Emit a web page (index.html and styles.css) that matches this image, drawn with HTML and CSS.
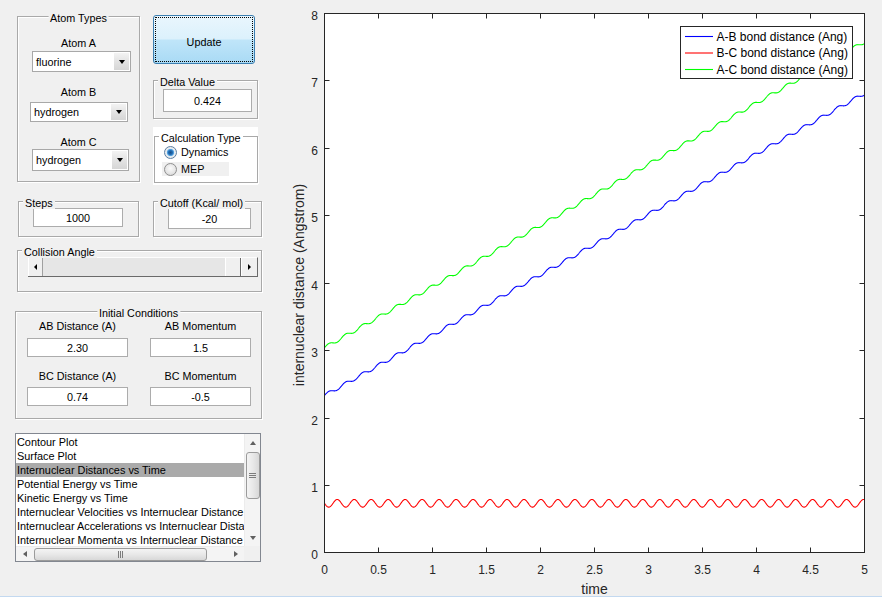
FILE: index.html
```html
<!DOCTYPE html>
<html lang="en">
<head>
<meta charset="utf-8">
<title>Reaction Dynamics</title>
<link rel="stylesheet" href="styles.css">
</head>
<body>
<div class="app">
  <div class="controls">
    <div class="row row-top">
      <div class="group atom-group">
        <div class="group-title center">Atom Types</div>
        <div class="field field-a">
          <div class="label">Atom A</div>
          <div class="dropdown dd-a"><span class="dd-text">fluorine</span><span class="dd-btn"></span></div>
        </div>
        <div class="field field-b">
          <div class="label">Atom B</div>
          <div class="dropdown dd-b"><span class="dd-text">hydrogen</span><span class="dd-btn"></span></div>
        </div>
        <div class="field field-c">
          <div class="label">Atom C</div>
          <div class="dropdown dd-c"><span class="dd-text">hydrogen</span><span class="dd-btn"></span></div>
        </div>
      </div>
      <div class="side">
        <button class="update" type="button">Update</button>
        <div class="group delta-group">
          <div class="group-title">Delta Value</div>
          <input class="edit delta-edit" type="text" value="0.424" readonly>
        </div>
        <div class="calc-panel">
          <div class="group calc-group">
            <div class="group-title white">Calculation Type</div>
            <div class="radio-row rr-dyn"><span class="radio on"></span>Dynamics</div>
            <div class="radio-row rr-mep"><span class="radio"></span>MEP</div>
          </div>
        </div>
      </div>
    </div>

    <div class="row row-mid">
      <div class="group steps-group">
        <div class="group-title">Steps</div>
        <input class="edit steps-edit" type="text" value="1000" readonly>
      </div>
      <div class="group cutoff-group">
        <div class="group-title">Cutoff (Kcal/ mol)</div>
        <input class="edit cutoff-edit" type="text" value="-20" readonly>
      </div>
    </div>

    <div class="group collision-group">
      <div class="group-title">Collision Angle</div>
      <div class="slider">
        <span class="sl-btn sl-left"><span class="tri tri-left"></span></span>
        <span class="sl-track"></span>
        <span class="sl-thumb"></span>
        <span class="sl-btn sl-right"><span class="tri tri-right"></span></span>
      </div>
    </div>

    <div class="group initial-group">
      <div class="group-title center">Initial Conditions</div>
      <div class="ic-grid">
        <div class="label">AB Distance (A)</div>
        <div class="label">AB Momentum</div>
        <input class="edit ic-edit" type="text" value="2.30" readonly>
        <input class="edit ic-edit" type="text" value="1.5" readonly>
        <div class="label ic-label2">BC Distance (A)</div>
        <div class="label ic-label2">BC Momentum</div>
        <input class="edit ic-edit2" type="text" value="0.74" readonly>
        <input class="edit ic-edit2" type="text" value="-0.5" readonly>
      </div>
    </div>

    <div class="listbox">
      <div class="lb-items">
        <div class="lb-item">Contour Plot</div>
        <div class="lb-item">Surface Plot</div>
        <div class="lb-item sel">Internuclear Distances vs Time</div>
        <div class="lb-item">Potential Energy vs Time</div>
        <div class="lb-item">Kinetic Energy vs Time</div>
        <div class="lb-item">Internuclear Velocities vs Internuclear Distance</div>
        <div class="lb-item">Internuclear Accelerations vs Internuclear Distance</div>
        <div class="lb-item">Internuclear Momenta vs Internuclear Distance</div>
      </div>
      <div class="vscroll">
        <span class="sb-btn"><span class="arr arr-up"></span></span>
        <span class="vthumb"><span class="grip-v"></span></span>
        <span class="sb-space"></span>
        <span class="sb-btn"><span class="arr arr-down"></span></span>
      </div>
      <div class="hscroll">
        <span class="sb-btn"><span class="arr arr-left"></span></span>
        <span class="hthumb"><span class="grip-h"></span></span>
        <span class="sb-space"></span>
        <span class="sb-btn"><span class="arr arr-right"></span></span>
      </div>
      <div class="corner"></div>
    </div>
  </div>

  <svg class="plot" width="612" height="596" viewBox="270 0 612 596" xmlns="http://www.w3.org/2000/svg">
    <defs>
      <clipPath id="axclip"><rect x="324.5" y="13.5" width="540" height="539"/></clipPath>
    </defs>
    <rect class="ax-bg" x="324.5" y="13.5" width="540" height="539"/>
    <g class="curves" clip-path="url(#axclip)">
      <polyline id="c-ab" class="c-blue" points=""/>
      <polyline id="c-bc" class="c-red" points=""/>
      <polyline id="c-ac" class="c-green" points=""/>
    </g>
    <rect class="ax-box" x="324.5" y="13.5" width="540" height="539"/>
    <path class="ticks" d="
      M324.5 552.5v-5 M378.5 552.5v-5 M432.5 552.5v-5 M486.5 552.5v-5 M540.5 552.5v-5 M594.5 552.5v-5 M648.5 552.5v-5 M702.5 552.5v-5 M756.5 552.5v-5 M810.5 552.5v-5 M864.5 552.5v-5
      M324.5 13.5v5 M378.5 13.5v5 M432.5 13.5v5 M486.5 13.5v5 M540.5 13.5v5 M594.5 13.5v5 M648.5 13.5v5 M702.5 13.5v5 M756.5 13.5v5 M810.5 13.5v5 M864.5 13.5v5
      M324.5 552.5h5 M324.5 485.5h5 M324.5 418.5h5 M324.5 350.5h5 M324.5 283.5h5 M324.5 215.5h5 M324.5 148.5h5 M324.5 80.5h5 M324.5 13.5h5
      M864.5 552.5h-5 M864.5 485.5h-5 M864.5 418.5h-5 M864.5 350.5h-5 M864.5 283.5h-5 M864.5 215.5h-5 M864.5 148.5h-5 M864.5 80.5h-5 M864.5 13.5h-5"/>
    <g class="ytl">
      <text x="318" y="559">0</text>
      <text x="318" y="491.5">1</text>
      <text x="318" y="424.5">2</text>
      <text x="318" y="356.5">3</text>
      <text x="318" y="289.5">4</text>
      <text x="318" y="221.5">5</text>
      <text x="318" y="154.5">6</text>
      <text x="318" y="86.5">7</text>
      <text x="318" y="19.5">8</text>
    </g>
    <g class="xtl">
      <text x="324.5" y="573.5">0</text>
      <text x="378.5" y="573.5">0.5</text>
      <text x="432.5" y="573.5">1</text>
      <text x="486.5" y="573.5">1.5</text>
      <text x="540.5" y="573.5">2</text>
      <text x="594.5" y="573.5">2.5</text>
      <text x="648.5" y="573.5">3</text>
      <text x="702.5" y="573.5">3.5</text>
      <text x="756.5" y="573.5">4</text>
      <text x="810.5" y="573.5">4.5</text>
      <text x="864.5" y="573.5">5</text>
    </g>
    <text class="axlabel" x="594.5" y="593.5">time</text>
    <text class="axlabel" transform="translate(304 285) rotate(-90)">internuclear distance (Angstrom)</text>
    <g class="legend">
      <rect class="lg-box" x="680.5" y="26.5" width="172" height="52"/>
      <line class="c-blue" x1="685" y1="36.5" x2="713" y2="36.5"/>
      <line class="c-red" x1="685" y1="53" x2="713" y2="53"/>
      <line class="c-green" x1="685" y1="69.5" x2="713" y2="69.5"/>
      <text class="lg-text" x="716.5" y="40.8">A-B bond distance (Ang)</text>
      <text class="lg-text" x="716.5" y="57.3">B-C bond distance (Ang)</text>
      <text class="lg-text" x="716.5" y="73.8">A-C bond distance (Ang)</text>
    </g>
  </svg>
</div>
<div class="status-line"></div>
<script src="script.js"></script>
</body>
</html>
```

FILE: styles.css
```css
* { box-sizing: border-box; }
html, body { margin: 0; padding: 0; }
body {
  background: #f0f0f0;
  font-family: "Liberation Sans", Arial, sans-serif;
  font-size: 10.8px;
  color: #000;
  width: 882px;
  height: 597px;
  overflow: hidden;
}
.app { display: flex; height: 596px; }
.status-line { height: 1px; background: #c3d9f0; }

.controls {
  width: 270px;
  flex: none;
  display: flex;
  flex-direction: column;
  align-items: flex-start;
}
.row { display: flex; align-items: flex-start; }

/* group boxes */
.group {
  position: relative;
  border: 1px solid #a9a9a9;
  box-shadow: inset 1px 1px 0 #fff, 1px 1px 0 #fff;
}
.group-title {
  position: absolute;
  top: -5px;
  left: 4px;
  padding: 0 2px;
  line-height: 12px;
  background: #f0f0f0;
  white-space: nowrap;
}
.group-title.center { left: 50%; transform: translateX(-50%); }
.group-title.white { background: #fff; }

.label { line-height: 14px; text-align: center; white-space: nowrap; }

/* edits */
.edit {
  display: block;
  margin: 0;
  padding: 0;
  border: 1px solid #acacac;
  background: #fff;
  font: inherit;
  color: #000;
  text-align: center;
  outline: none;
}

/* dropdowns */
.dropdown {
  display: flex;
  align-items: stretch;
  border: 1px solid #a8a8a8;
  background: #fff;
}
.dd-text { flex: 1; padding-left: 3px; display: flex; align-items: center; }
.dd-btn {
  width: 15px;
  margin: 1px;
  background: linear-gradient(#f3f3f3, #e3e3e3 50%, #d6d6d6);
  display: flex;
  align-items: center;
  justify-content: center;
}
.dd-btn::after {
  content: "";
  border-left: 3.5px solid transparent;
  border-right: 3.5px solid transparent;
  border-top: 4px solid #000;
}

/* top row */
.row-top { margin-left: 17px; }
.atom-group { width: 123px; height: 166px; margin-top: 16px; }
.field-a { margin-top: 19px; }
.field-b, .field-c { margin-top: 13px; }
.dd-a { margin: 1px 0 0 14px; width: 99px; height: 21px; }
.dd-b { margin: 3px 0 0 12px; width: 98px; height: 20px; }
.dd-c { margin: 0 0 0 14px; width: 97px; height: 22px; }

.side { margin-left: 13px; width: 105px; display: flex; flex-direction: column; }
.update {
  width: 102px;
  height: 49px;
  margin: 15px 0 0 0;
  padding: 4px 0 0 0;
  border: 1px solid #3c7fb1;
  border-radius: 3px;
  background: linear-gradient(#e9f6fd 0%, #dcf1fc 48%, #bfe5f9 52%, #a9daf5 100%);
  font: inherit;
  color: #000;
  outline: 1px dotted #000;
  outline-offset: -3px;
}
.delta-group { width: 105px; height: 39px; margin-top: 16px; }
.delta-edit { margin: 8px 0 0 9px; width: 89px; height: 23px; }

.calc-panel {
  margin-top: 8px;
  width: 105px;
  height: 58px;
  background: #fff;
  padding: 9px 0 0 1px;
}
.calc-group { width: 104px; height: 47px; }
.radio-row { display: flex; align-items: center; height: 14px; gap: 4px; }
.rr-dyn { margin: 8px 0 0 9px; }
.rr-mep { margin: 3px 0 0 7px; width: 67px; padding-left: 2px; background: #f0f0f0; }
.radio {
  flex: none;
  width: 13px;
  height: 13px;
  border-radius: 50%;
  border: 1px solid #8f8f8f;
  background: radial-gradient(circle at 50% 40%, #fbfbfb 0, #e6e6e6 55%, #cdcdcd 100%);
}
.radio.on {
  border-color: #5c7fa3;
  background: radial-gradient(circle at 50% 50%, #1a4f86 0, #1f6cb4 2px, #5fa8e2 3.3px, #d8ebf8 4px, #eeeeee 4.6px, #d9d9d9 100%);
}

/* steps / cutoff */
.row-mid { margin: 16px 0 0 18px; gap: 14px; }
.steps-group { width: 121px; height: 36px; }
.steps-edit { margin: 6px 0 0 14px; width: 90px; height: 19px; }
.cutoff-group { width: 109px; height: 36px; }
.cutoff-edit { margin: 6px 0 0 14px; width: 83px; height: 21px; }

/* collision angle */
.collision-group { margin: 13px 0 0 17px; width: 245px; height: 42px; }
.slider {
  display: flex;
  margin: 6px 0 0 10px;
  width: 230px;
  height: 20px;
  background: #e6e6e6;
  border-bottom: 1px solid #6a6a6a;
  border-right: 1px solid #6a6a6a;
  border-top: 1px solid #fdfdfd;
}
.sl-btn {
  width: 15px;
  background: #f0f0f0;
  display: flex;
  align-items: center;
  justify-content: center;
  border-left: 1px solid #fff;
}
.sl-left { border-right: 1px solid #a0a0a0; }
.sl-right { width: 16px; border-left: 1px solid #fff; }
.sl-track { flex: 1; }
.sl-thumb {
  width: 16px;
  background: #f0f0f0;
  border-left: 1px solid #fff;
  border-right: 1px solid #6a6a6a;
}
.tri { width: 0; height: 0; }
.tri-left { border-top: 3px solid transparent; border-bottom: 3px solid transparent; border-right: 3px solid #000; }
.tri-right { border-top: 3px solid transparent; border-bottom: 3px solid transparent; border-left: 3px solid #000; }

/* initial conditions */
.initial-group { margin: 19px 0 0 15px; width: 247px; height: 108px; }
.ic-grid {
  display: grid;
  grid-template-columns: 101px 101px;
  column-gap: 22px;
  margin-left: 11px;
  padding-top: 7px;
}
.ic-edit { margin-top: 5px; width: 101px; height: 19px; }
.ic-label2 { margin-top: 12px; }
.ic-edit2 { margin-top: 4px; width: 101px; height: 19px; }

/* listbox */
.listbox {
  margin: 14px 0 0 15px;
  width: 246px;
  height: 129px;
  border: 1px solid #828790;
  background: #fff;
  display: grid;
  grid-template-columns: 228px 16px;
  grid-template-rows: 112px 15px;
}
.lb-items { overflow: hidden; padding-top: 1px; font-size: 10.9px; }
.lb-item { line-height: 14px; padding-left: 1px; white-space: nowrap; overflow: hidden; }
.lb-item.sel { background: #aaaaaa; }

.vscroll {
  display: flex;
  flex-direction: column;
  align-items: center;
  background: #f4f4f4;
  border-left: 1px solid #ececec;
}
.hscroll {
  display: flex;
  align-items: center;
  background: #f4f4f4;
  border-top: 1px solid #ececec;
}
.corner { background: #f0f0f0; }
.sb-btn { flex: none; width: 17px; height: 17px; display: flex; align-items: center; justify-content: center; }
.hscroll .sb-btn { height: 14px; }
.sb-space { flex: 1; }
.arr { width: 0; height: 0; }
.arr-up { border-left: 3.5px solid transparent; border-right: 3.5px solid transparent; border-bottom: 4px solid #606060; }
.arr-down { border-left: 3.5px solid transparent; border-right: 3.5px solid transparent; border-top: 4px solid #606060; }
.arr-left { border-top: 3.5px solid transparent; border-bottom: 3.5px solid transparent; border-right: 4px solid #606060; }
.arr-right { border-top: 3.5px solid transparent; border-bottom: 3.5px solid transparent; border-left: 4px solid #606060; }
.vthumb {
  flex: none;
  margin-top: 1px;
  width: 14px;
  height: 47px;
  border: 1px solid #9b9b9b;
  border-radius: 3px;
  background: linear-gradient(90deg, #f4f4f4, #e8e8e8 50%, #d8d8d8);
  display: flex;
  align-items: center;
  justify-content: center;
}
.grip-v { width: 7px; height: 5px; background: repeating-linear-gradient(#7c7c7c 0 1px, transparent 1px 2px); }
.hthumb {
  flex: none;
  margin-left: 1px;
  width: 173px;
  height: 13px;
  border: 1px solid #9b9b9b;
  border-radius: 3px;
  background: linear-gradient(#f4f4f4, #e8e8e8 50%, #d8d8d8);
  display: flex;
  align-items: center;
  justify-content: center;
}
.grip-h { width: 5px; height: 7px; background: repeating-linear-gradient(90deg, #7c7c7c 0 1px, transparent 1px 2px); }

/* plot */
.plot { flex: none; display: block; }
.ax-bg { fill: #fff; }
.ax-box { fill: none; stroke: #262626; stroke-width: 1; }
.ticks { fill: none; stroke: #262626; stroke-width: 1; }
.curves polyline { fill: none; stroke-width: 1.1; }
.c-blue { stroke: #0000ff; fill: none; }
.c-red { stroke: #ff0000; fill: none; }
.c-green { stroke: #00ff00; fill: none; }
.ytl text, .xtl text {
  font-family: "Liberation Sans", Arial, sans-serif;
  font-size: 12px;
  fill: #262626;
}
.ytl text { text-anchor: end; }
.xtl text { text-anchor: middle; }
.axlabel {
  font-family: "Liberation Sans", Arial, sans-serif;
  font-size: 14px;
  fill: #262626;
  text-anchor: middle;
}
.lg-box { fill: #fff; stroke: #262626; stroke-width: 1; }
.legend line { stroke-width: 1.1; }
.lg-text {
  font-family: "Liberation Sans", Arial, sans-serif;
  font-size: 12px;
  fill: #000;
}
```

FILE: script.js
```js
(function () {
  var X0 = 324.5, X1 = 864.5, YB = 552.5, YT = 13.5;
  var w = 2 * Math.PI / 0.1572;
  function sx(t) { return X0 + (X1 - X0) * t / 5; }
  function sy(v) { return YB - (YB - YT) * v / 8; }
  function pts(f) {
    var a = [];
    for (var i = 0; i <= 2500; i++) {
      var t = 5 * i / 2500;
      a.push(sx(t).toFixed(2) + ',' + sy(f(t)).toFixed(2));
    }
    return a.join(' ');
  }
  document.getElementById('c-ab').setAttribute('points', pts(function (t) { return 2.33 + 0.897 * t + 0.026 * Math.sin(w * t); }));
  document.getElementById('c-bc').setAttribute('points', pts(function (t) { return 0.73 - 0.057 * Math.sin(w * t); }));
  document.getElementById('c-ac').setAttribute('points', pts(function (t) { return 3.04 + 0.908 * t + 0.026 * Math.sin(w * t); }));
})();
```
